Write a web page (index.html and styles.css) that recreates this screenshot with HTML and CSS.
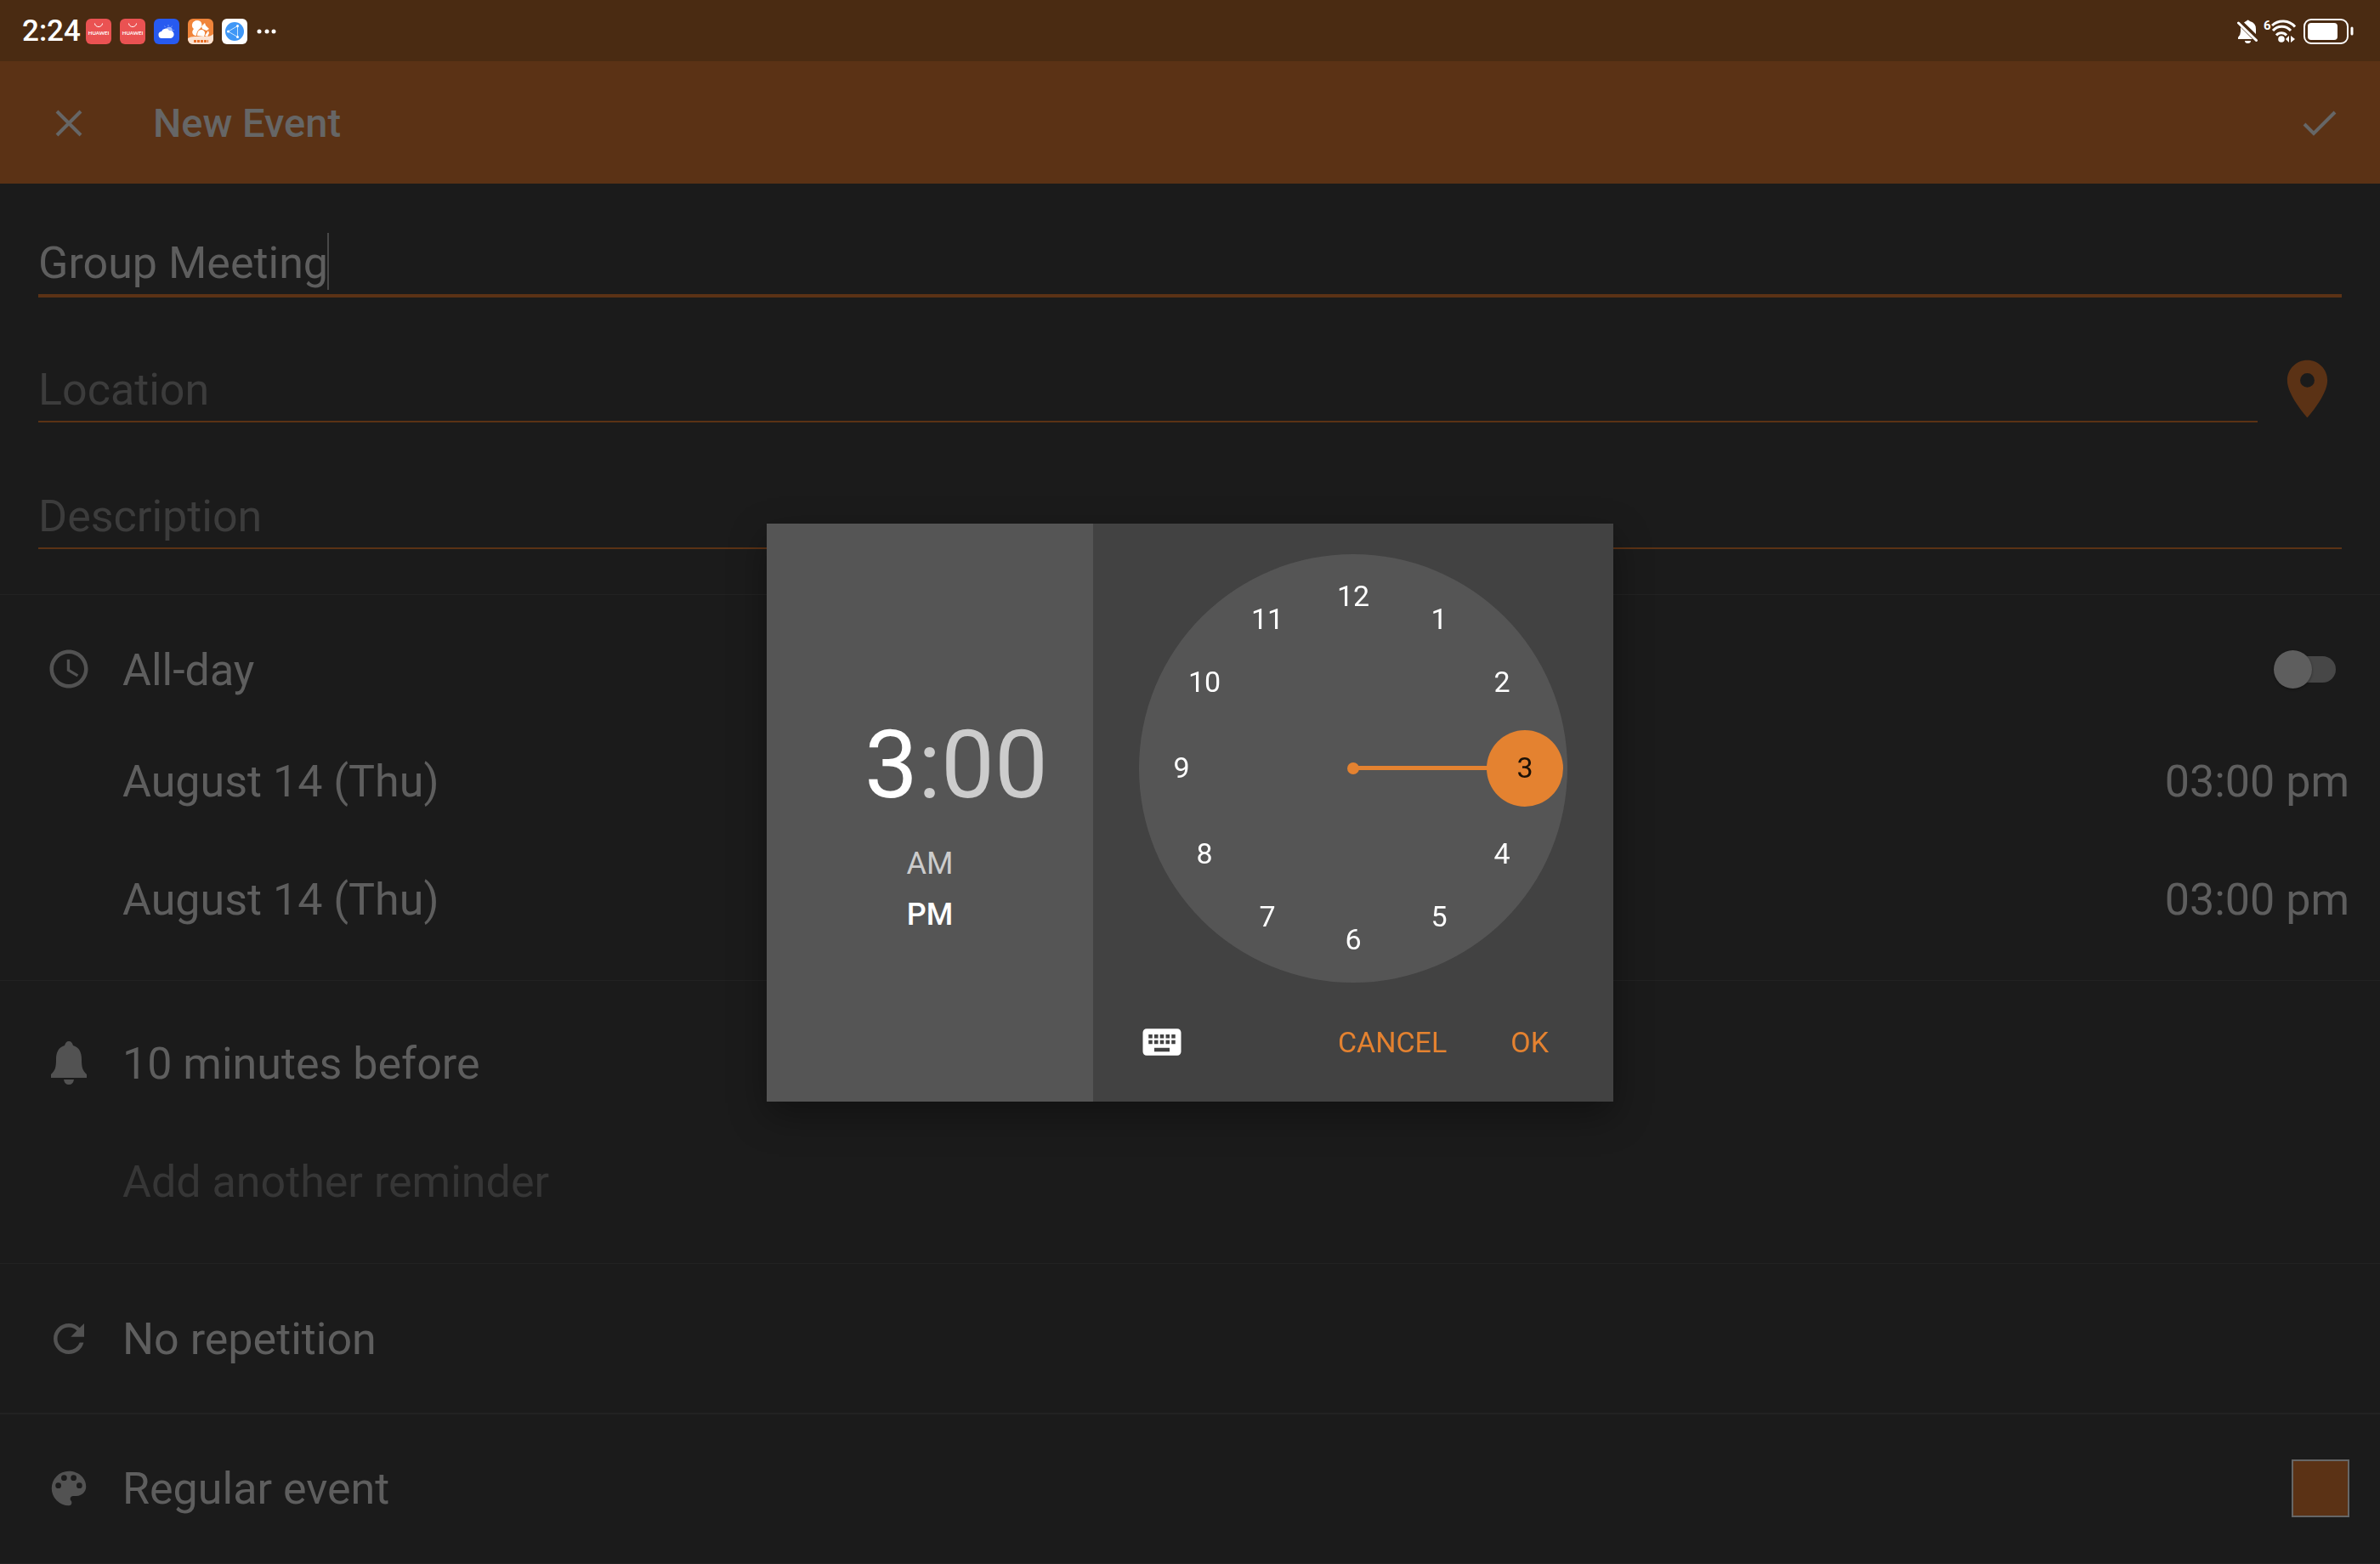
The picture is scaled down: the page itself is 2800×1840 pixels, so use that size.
FILE: index.html
```html
<!DOCTYPE html>
<html lang="en">
<head>
<meta charset="utf-8">
<title>New Event</title>
<link rel="stylesheet" href="styles.css">
</head>
<body>
<header class="status-bar">
  <span class="status-time">2:24</span>
  <span class="app-icons">
    <svg class="app-icon" viewBox="0 0 30 30" aria-hidden="true"><rect width="30" height="30" rx="6" fill="#ea5252"/><path d="M10.500 5.500a4.500 4 0 0 0 9 0" fill="none" stroke="#fff"/><text x="15" y="19" class="brand">HUAWEI</text></svg>
    <svg class="app-icon" viewBox="0 0 30 30" aria-hidden="true"><rect width="30" height="30" rx="6" fill="#ea5252"/><path d="M10.500 5.500a4.500 4 0 0 0 9 0" fill="none" stroke="#fff"/><text x="15" y="19" class="brand">HUAWEI</text></svg>
    <svg class="app-icon" viewBox="0 0 30 30" aria-hidden="true"><rect width="30" height="30" rx="6" fill="#275af0"/><circle cx="18" cy="13.500" r="3.800" fill="#9db6fb"/><path d="M17 7v2M21.500 8.500l-1 1.500M12.500 8.500l1 1.500M24 13.500h-1.500" stroke="#7c9cf8"/><path d="M10 23a4 4 0 0 1-1-8 5 5 0 0 1 9-1 4.500 4.500 0 1 1 2 9z" fill="#fff"/></svg>
    <svg class="app-icon" viewBox="0 0 30 30" aria-hidden="true"><defs><clipPath id="tile"><rect width="30" height="30" rx="6"/></clipPath></defs><g clip-path="url(#tile)"><rect width="30" height="30" fill="#f0843a"/><path d="M0 23q3-2 8-2h14q5 0 8-3v12H0z" fill="#fbe3d3"/><path d="M9 20c-4-1-5-5-2-8-4-3-2-10 4-10 5 0 7 5 4 9-3 2-5 5-5 9z" fill="#fff"/><path d="M16 9l4-4 1 3 4 4-3 2-5-2z" fill="#fff"/><path d="M11 20q0-8 6-7 5 2 2 8z" fill="#fff"/><path d="M20 20l4-6 1 3-2 4z" fill="#fff"/><path d="M7 26.500h17" stroke="#e8702a" stroke-width="3" stroke-dasharray="3 1"/></g></svg>
    <svg class="app-icon" viewBox="0 0 30 30" aria-hidden="true"><rect width="30" height="30" rx="6" fill="#fff"/><circle cx="15" cy="15" r="11" fill="#3f97f6"/><path d="M7.500 15L18.500 8.500v13z" fill="none" stroke="#c9e6ff"/><g fill="#fff"><circle cx="7.500" cy="15" r="1.500"/><circle cx="18.500" cy="8.500" r="1.500"/><circle cx="18.500" cy="21.500" r="1.500"/></g></svg>
    <svg class="more" viewBox="0 0 24 30" aria-hidden="true"><g fill="#fff"><circle cx="4" cy="15" r="2.500"/><circle cx="13" cy="15" r="2.500"/><circle cx="21" cy="15" r="2.500"/></g></svg>
  </span>
  <span class="system-icons">
    <svg class="sys-bell" viewBox="0 0 26 30" aria-hidden="true"><path d="M8 4.500Q9.500 3 10.500 3q2-3 4.500 0 7 2 7 9v6zM4 10v5q0 4-3 7v2h17zM9 26h7a3.500 3 0 0 1-7 0z" fill="#fff"/><path d="M1.500 5l21 20.500" stroke="#fff" stroke-width="3" stroke-linecap="round"/></svg>
    <svg class="sys-wifi" viewBox="0 0 40 30" aria-hidden="true"><text x="-1" y="13" class="wifi-gen">6</text><g fill="none" stroke="#fff" stroke-width="3"><path d="M9 8a19 19 0 0 1 27 1.500"/><path d="M10 14a14 14 0 0 1 21 0"/><path d="M14 19.500a8 8 0 0 1 12 0"/></g><circle cx="20" cy="24" r="3.800" fill="#fff"/><path d="M25 24l4-4v8zM31 20v8l5-4z" fill="#fff"/></svg>
    <svg class="sys-battery" viewBox="0 0 60 30" aria-hidden="true"><rect x="1" y="1" width="51" height="28" rx="8" fill="none" stroke="#fff" stroke-width="2"/><rect x="5" y="5" width="35" height="20" rx="4" fill="#fff"/><path d="M57 11v7" stroke="#fff" stroke-width="3" stroke-linecap="round"/></svg>
  </span>
</header>

<nav class="app-bar">
  <button aria-label="Close"><svg class="icon-close" viewBox="0 0 32 32"><path d="M2 2l28 28M30 2L2 30" fill="none" stroke="currentColor" stroke-width="4"/></svg></button>
  <h1 class="title">New Event</h1>
  <button aria-label="Save"><svg class="icon-check" viewBox="0 0 40 32"><path d="M2 17l11 11L38 3" fill="none" stroke="currentColor" stroke-width="4"/></svg></button>
</nav>

<main>
  <section class="fields">
    <div class="field focused">
      <input id="event-title" type="text" value="Group Meeting" aria-label="Title">
      <span class="caret"></span>
    </div>
    <div class="field-row">
      <div class="field"><input id="location" type="text" placeholder="Location" aria-label="Location"></div>
      <button class="pin" aria-label="Pick a place"><svg class="icon-pin" viewBox="0 0 24 24"><path fill="currentColor" d="M12 2C8.130 2 5 5.130 5 9c0 5.250 7 13 7 13s7-7.750 7-13c0-3.870-3.130-7-7-7zm0 9.500a2.500 2.500 0 0 1 0-5 2.500 2.500 0 0 1 0 5z"/></svg></button>
    </div>
    <div class="field"><input id="description" type="text" placeholder="Description" aria-label="Description"></div>
  </section>

  <section class="group times">
    <div class="row">
      <svg class="icon" viewBox="0 0 24 24" aria-hidden="true"><path fill="currentColor" d="M11.990 2C6.470 2 2 6.480 2 12s4.470 10 9.990 10C17.520 22 22 17.520 22 12S17.520 2 11.990 2zM12 20c-4.420 0-8-3.580-8-8s3.580-8 8-8 8 3.580 8 8-3.580 8-8 8zm.5-13H11v6l5.250 3.150.750-1.230-4.500-2.670z"/></svg>
      <label class="row-text" for="all-day">All-day</label>
      <input class="switch" id="all-day" type="checkbox" role="switch">
    </div>
    <div class="row indented"><button class="row-text">August 14 (Thu)</button><button class="row-value">03:00 pm</button></div>
    <div class="row indented"><button class="row-text">August 14 (Thu)</button><button class="row-value">03:00 pm</button></div>
  </section>

  <section class="group reminders">
    <div class="row">
      <svg class="icon" viewBox="0 0 54 54" aria-hidden="true"><path fill="currentColor" d="M27 1c3 0 4 2 5 5 7 2 10 8 10 16 0 10 1 13 6 18v4H6v-4c5-5 6-8 6-18 0-8 3-14 10-16 1-3 2-5 5-5zM21 46h12q-1 6-6 6t-6-6z"/></svg>
      <button class="row-text">10 minutes before</button>
    </div>
    <div class="row indented"><button class="row-text faint">Add another reminder</button></div>
  </section>

  <section class="group single">
    <div class="row">
      <svg class="icon" viewBox="0 0 24 24" aria-hidden="true"><path fill="currentColor" d="M17.650 6.350A7.958 7.958 0 0 0 12 4c-4.420 0-7.990 3.580-7.990 8s3.570 8 7.990 8c3.730 0 6.840-2.550 7.730-6h-2.080A5.990 5.990 0 0 1 12 18c-3.310 0-6-2.690-6-6s2.690-6 6-6c1.660 0 3.140.690 4.220 1.780L13 11h7V4z"/></svg>
      <button class="row-text">No repetition</button>
    </div>
  </section>

  <section class="group color">
    <div class="row">
      <svg class="icon" viewBox="0 0 24 24" aria-hidden="true"><path fill="currentColor" d="M12 3a9 9 0 0 0 0 18c.830 0 1.500-.670 1.500-1.500 0-.390-.150-.740-.390-1.010-.230-.260-.380-.610-.380-.990 0-.830.670-1.500 1.500-1.500H16c2.760 0 5-2.240 5-5 0-4.420-4.030-8-9-8zm-5.500 9a1.500 1.500 0 1 1 0-3 1.500 1.500 0 0 1 0 3zm3-4a1.500 1.500 0 1 1 0-3 1.500 1.500 0 0 1 0 3zm5 0a1.500 1.500 0 1 1 0-3 1.500 1.500 0 0 1 0 3zm3 4a1.500 1.500 0 1 1 0-3 1.500 1.500 0 0 1 0 3z"/></svg>
      <button class="row-text">Regular event</button>
      <button class="swatch" aria-label="Event color"></button>
    </div>
  </section>
</main>

<div class="overlay">
  <div class="dialog" role="dialog" aria-label="Select time">
    <div class="readout">
      <div class="time"><button class="on">3</button><span>:</span><button>00</button></div>
      <div class="period"><button>AM</button><button class="on">PM</button></div>
    </div>
    <div class="picker">
      <svg class="dial" viewBox="0 0 504 504" role="img" aria-label="Hour dial">
        <circle cx="252" cy="252" r="252" fill="#555"/>
        <g fill="#e48230"><circle cx="252" cy="252" r="7"/><rect x="252" y="249" width="202" height="5"/><circle cx="454" cy="252" r="45"/></g>
        <g class="hours">
          <text x="252" y="61">12</text><text x="353" y="88">1</text><text x="427" y="162">2</text>
          <text x="454" y="263" class="picked">3</text><text x="427" y="364">4</text><text x="353" y="438">5</text>
          <text x="252" y="465">6</text><text x="151" y="438">7</text><text x="77" y="364">8</text>
          <text x="50" y="263">9</text><text x="77" y="162">10</text><text x="151" y="88">11</text>
        </g>
      </svg>
      <div class="actions">
        <button class="keyboard" aria-label="Switch to text input"><svg class="icon" viewBox="0 0 24 24"><path fill="currentColor" d="M20 5H4c-1.100 0-2 .9-2 2v10c0 1.100.9 2 2 2h16c1.100 0 2-.9 2-2V7c0-1.100-.9-2-2-2zm-9 3h2v2h-2V8zm0 3h2v2h-2v-2zM8 8h2v2H8V8zm0 3h2v2H8v-2zm-1 2H5v-2h2v2zm0-3H5V8h2v2zm9 7H8v-2h8v2zm0-4h-2v-2h2v2zm0-3h-2V8h2v2zm3 3h-2v-2h2v2zm0-3h-2V8h2v2z"/></svg></button>
        <button>CANCEL</button>
        <button>OK</button>
      </div>
    </div>
  </div>
</div>
</body>
</html>
```
FILE: styles.css
```css
* { box-sizing: border-box; }

body {
  margin: 0;
  min-height: 100vh;
  background: #1b1b1b;
  color: #5e5e5e;
  font: 400 52px/62px Roboto, "Noto Sans", sans-serif;
}

button, input {
  margin: 0;
  padding: 0;
  border: 0;
  background: none;
  color: inherit;
  font: inherit;
}

svg { display: block; }

/* Status bar */
.status-bar {
  display: flex;
  align-items: center;
  gap: 6px;
  height: 72px;
  padding: 2px 30px 0 26px;
  background: #4a2b12;
  color: #fff;
}
.status-time { font-size: 35px; font-weight: 500; line-height: 40px; }
.app-icons { display: flex; flex: 1; gap: 10px; }
.app-icon { width: 30px; height: 30px; }
.more { width: 24px; height: 30px; }
.brand { font: 700 6px Lato, sans-serif; text-anchor: middle; fill: #fff; }
.system-icons { display: flex; gap: 6px; }
.sys-bell { width: 26px; height: 30px; }
.sys-wifi { width: 40px; height: 30px; overflow: visible; }
.sys-battery { width: 60px; height: 30px; }
.wifi-gen { font: 700 15px Roboto, sans-serif; fill: #fff; }

/* App bar */
.app-bar {
  display: flex;
  align-items: center;
  height: 144px;
  padding: 1px 51px 0 65px;
  background: #5b3215;
  color: #666;
}
.title { flex: 1; margin: 0; padding-left: 83px; font-size: 47px; font-weight: 500; }
.icon-close { width: 32px; height: 32px; }
.icon-check { width: 40px; height: 32px; }

/* Text fields */
.fields { padding: 53px 45px; border-bottom: 1px solid #222; }
.field {
  display: flex;
  align-items: center;
  position: relative;
  flex: 1;
  height: 79px;
  padding-top: 4px;
  border-bottom: 2px solid #5b3215;
}
.field.focused { height: 81px; margin-bottom: 68px; border-bottom-width: 4px; }
.field input { width: 100%; height: 70px; outline: 0; }
.field input::placeholder { color: #3c3c3c; opacity: 1; }
.caret { position: absolute; left: 340px; top: 5px; width: 2px; height: 67px; background: #484848; }
.field-row { display: flex; align-items: center; gap: 18px; height: 79px; margin-bottom: 70px; }
.pin { color: #5b3215; }
.icon-pin { width: 81px; height: 81px; }

/* Option rows */
.group { border-bottom: 1px solid #222; }
.row {
  display: flex;
  align-items: center;
  gap: 36px;
  height: 139px;
  padding: 0 36px 0 54px;
}
.indented { padding-left: 144px; }
.row-text, .row-value { padding-top: 3px; }
.row-text { flex: 1; text-align: left; }
.faint { color: #363636; }
.icon { width: 54px; height: 54px; color: #525252; }
.times { padding: 25px 0 26px; }
.times .row:first-child { height: 124px; }
.reminders { padding: 27px 0; }
.single { padding: 18px 0; border-bottom-width: 2px; }
.color { padding: 17px 0 19px; }

.switch {
  appearance: none;
  position: relative;
  width: 74px;
  height: 45px;
  margin-right: 15px;
}
.switch::before {
  content: "";
  position: absolute;
  inset: 7px 1px 7px 14px;
  border-radius: 16px;
  background: #474747;
}
.switch::after {
  content: "";
  position: absolute;
  left: 0;
  top: 0;
  width: 45px;
  height: 45px;
  border-radius: 50%;
  background: #5e5e5e;
  box-shadow: 0 1px 3px rgba(0, 0, 0, .4);
}
.swatch { width: 68px; height: 68px; border: 2px solid #666; background: #5b3215; }

/* Time picker */
.overlay {
  position: fixed;
  inset: 72px 0 0;
  display: flex;
  align-items: center;
  justify-content: center;
}
.dialog {
  display: flex;
  height: 680px;
  background: #424242;
  box-shadow: 0 16px 40px rgba(0, 0, 0, .35);
}
.readout {
  display: flex;
  flex-direction: column;
  align-items: flex-end;
  width: 384px;
  padding: 218px 53px 0 0;
  background: #555;
  color: #ccc;
}
.time { display: flex; font-size: 112px; line-height: 132px; }
.period {
  display: flex;
  flex-direction: column;
  width: 278px;
  padding-top: 20px;
  font-size: 36px;
  line-height: 60px;
}
.period .on { font-weight: 500; }
.on { color: #fff; }
.picker { width: 612px; padding: 36px 54px 0; }
.dial { width: 504px; height: 504px; }
.hours { font-size: 34px; fill: #fff; text-anchor: middle; }
.picked { fill: #1b1107; }
.actions {
  display: flex;
  align-items: center;
  gap: 75px;
  padding: 39px 22px 0 0;
  color: #e48230;
  font-size: 34px;
}
.keyboard { margin-right: auto; }
.keyboard .icon { color: #fff; }
```
